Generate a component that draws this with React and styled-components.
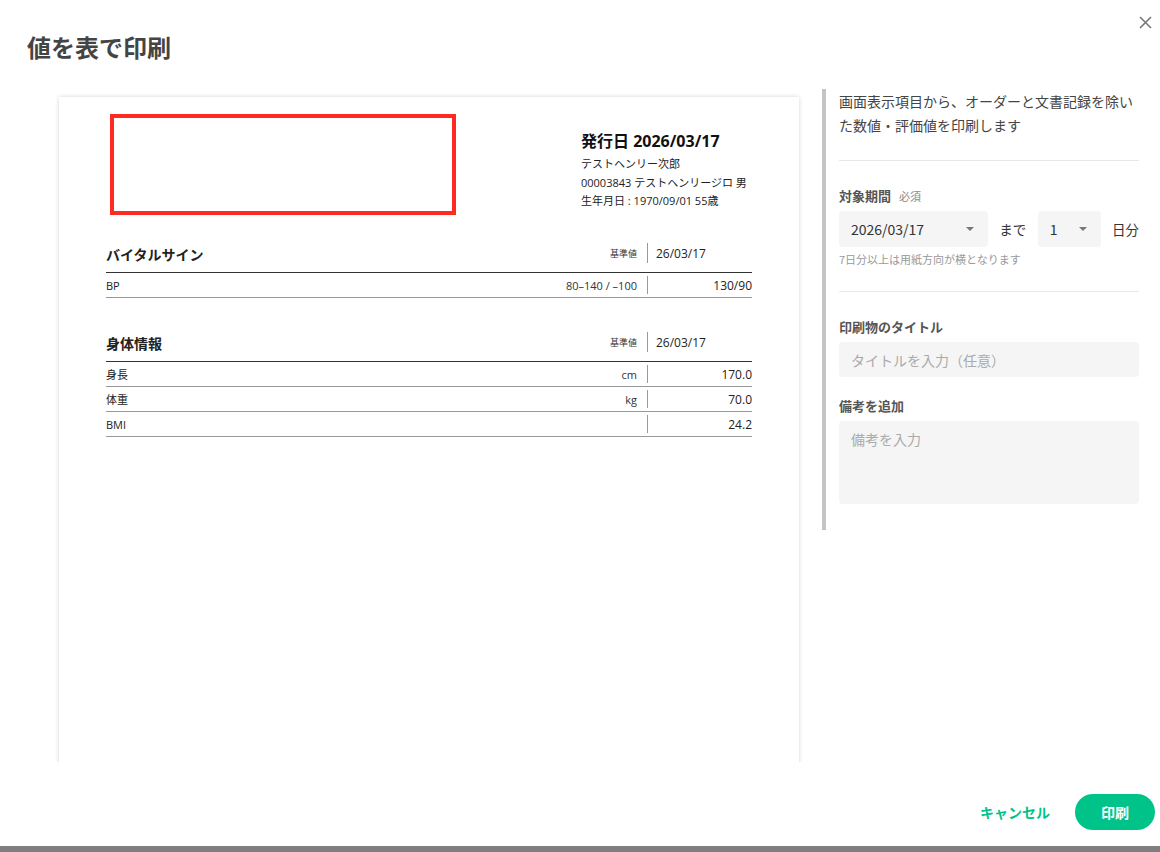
import React from 'react';
import styled, { createGlobalStyle } from 'styled-components';

const colors = {
  text: '#444',
  ink: '#222',
  muted: '#999',
  field: '#f5f5f5',
  green: '#00c389',
};

const GlobalStyle = createGlobalStyle`
  html, body {
    margin: 0;
    padding: 0;
    background: #7f7f7f;
    font-family: "Noto Sans CJK JP", "Noto Sans", sans-serif;
  }
  * { box-sizing: border-box; }
`;

const Modal = styled.div`
  width: 1160px;
  height: 846px;
  background: #fff;
  display: flex;
  flex-direction: column;
`;

const Header = styled.div`
  height: 89px;
  display: flex;
  align-items: flex-start;
  justify-content: space-between;
  padding: 31px 3px 0 27px;
`;

const Title = styled.h1`
  margin: 0;
  font-size: 24px;
  line-height: 32px;
  font-weight: 700;
  color: ${colors.text};
`;

const CloseButton = styled.button`
  margin-top: -21px;
  width: 24px;
  height: 24px;
  padding: 0;
  border: 0;
  background: none;
  display: flex;
  align-items: center;
  justify-content: center;
`;

const Body = styled.div`
  flex: 1;
  display: flex;
  min-height: 0;
`;

const PreviewPane = styled.div`
  width: 822px;
  height: 673px;
  overflow: hidden;
  padding: 8px 0 0 59px;
`;

const Paper = styled.div`
  width: 740px;
  height: 1000px;
  background: #fff;
  box-shadow: 0 0 4px rgba(0, 0, 0, 0.18);
  padding: 17px 47px 0;
  color: ${colors.ink};
  font-family: "Open Sans", "Noto Sans CJK JP", sans-serif;
`;

const PaperHead = styled.div`
  display: flex;
  justify-content: space-between;
  align-items: flex-start;
`;

const LogoBox = styled.div`
  margin-left: 4px;
  width: 346px;
  height: 101px;
  border: 4px solid #ff2b22;
`;

const Issue = styled.div`
  width: 171px;
  margin-top: 16px;
`;

const IssueDate = styled.div`
  font-size: 16px;
  font-weight: 700;
  line-height: 22px;
  color: #111;
  margin-bottom: 3px;
`;

const IssueLine = styled.div`
  font-size: 11px;
  line-height: 18.5px;
  color: #222;
  white-space: nowrap;
`;

const Section = styled.div`
  margin-top: ${(p) => p.$gap}px;
`;

const Row = styled.div`
  display: grid;
  grid-template-columns: 1fr auto 105px;
  align-items: stretch;
  height: ${(p) => (p.$head ? 38 : 25)}px;
  border-bottom: 1px solid ${(p) => (p.$head ? '#333' : '#999')};
`;

const Name = styled.div`
  display: flex;
  align-items: center;
  font-size: ${(p) => (p.$head ? 14 : 11)}px;
  font-weight: ${(p) => (p.$head ? 700 : 400)};
  color: #222;
`;

const Ref = styled.div`
  display: flex;
  align-items: center;
  justify-content: flex-end;
  padding-right: 10px;
  font-size: ${(p) => (p.$head ? 9 : 11)}px;
  color: #333;
`;

const Value = styled.div`
  display: flex;
  align-items: center;
  justify-content: ${(p) => (p.$head ? 'flex-start' : 'flex-end')};
  padding-left: 9px;
  font-size: 12px;
  color: #222;
  position: relative;
  &::before {
    content: '';
    position: absolute;
    left: 0;
    top: ${(p) => (p.$head ? 8 : 3)}px;
    bottom: ${(p) => (p.$head ? 9 : 3)}px;
    width: 1px;
    background: #999;
  }
`;

const Panel = styled.div`
  align-self: flex-start;
  width: 317px;
  border-left: 4px solid #c4c4c4;
  padding: 0 0 26px 13px;
`;

const Intro = styled.p`
  margin: 0;
  width: 300px;
  font-size: 14px;
  line-height: 24px;
  color: ${colors.text};
`;

const Divider = styled.hr`
  width: 300px;
  margin: ${(p) => p.$top}px 0 0;
  border: 0;
  border-top: 1px solid #e8e8e8;
`;

const Label = styled.div`
  margin-top: ${(p) => p.$top}px;
  font-size: 13px;
  line-height: 20px;
  font-weight: 700;
  color: #555;
`;

const Required = styled.span`
  margin-left: 8px;
  font-size: 11px;
  font-weight: 400;
  color: #888;
`;

const PeriodRow = styled.div`
  margin-top: 5px;
  width: 300px;
  display: flex;
  align-items: center;
  justify-content: space-between;
  font-size: 13.5px;
  color: #333;
  white-space: nowrap;
`;

const Select = styled.div`
  flex: none;
  width: ${(p) => p.$w}px;
  height: 36px;
  background: ${colors.field};
  border-radius: 4px;
  display: flex;
  align-items: center;
  justify-content: space-between;
  padding: 0 14px 0 12px;
  font-size: 14px;
  color: #333;
`;

const Caret = styled.span`
  width: 0;
  height: 0;
  border-left: 4px solid transparent;
  border-right: 4px solid transparent;
  border-top: 4px solid #777;
`;

const Hint = styled.div`
  margin-top: 4px;
  font-size: 11px;
  line-height: 16px;
  color: ${colors.muted};
`;

const Field = styled.div`
  margin-top: 5px;
  width: 300px;
  height: ${(p) => p.$h}px;
  background: ${colors.field};
  border-radius: 4px;
  padding: ${(p) => (p.$area ? '7px 12px' : '0 12px')};
  display: flex;
  align-items: ${(p) => (p.$area ? 'flex-start' : 'center')};
  font-size: 14px;
  line-height: 22px;
  color: #aaa;
`;

const Footer = styled.div`
  height: 84px;
  display: flex;
  align-items: center;
  justify-content: flex-end;
  gap: 25px;
  padding: 16px 5px 0 0;
`;

const TextButton = styled.button`
  border: 0;
  background: none;
  padding: 0;
  font-family: inherit;
  font-size: 14px;
  font-weight: 700;
  color: ${colors.green};
`;

const PrimaryButton = styled.button`
  width: 80px;
  height: 36px;
  border: 0;
  border-radius: 18px;
  background: ${colors.green};
  color: #fff;
  font-family: inherit;
  font-size: 14px;
  font-weight: 700;
`;

const sections = [
  {
    title: 'バイタルサイン',
    gap: 20,
    rows: [{ name: 'BP', ref: '80–140 / –100', value: '130/90' }],
  },
  {
    title: '身体情報',
    gap: 26,
    rows: [
      { name: '身長', ref: 'cm', value: '170.0' },
      { name: '体重', ref: 'kg', value: '70.0' },
      { name: 'BMI', ref: '', value: '24.2' },
    ],
  },
];

const App = () => (
  <>
    <GlobalStyle />
    <Modal>
      <Header>
        <Title>値を表で印刷</Title>
        <CloseButton aria-label="閉じる">
          <svg width="13" height="13" viewBox="0 0 13 13">
            <path d="M1 1L12 12M12 1L1 12" stroke="#777" strokeWidth="1.6" />
          </svg>
        </CloseButton>
      </Header>
      <Body>
        <PreviewPane>
          <Paper>
            <PaperHead>
              <LogoBox />
              <Issue>
                <IssueDate>発行日 2026/03/17</IssueDate>
                <IssueLine>テストヘンリー次郎</IssueLine>
                <IssueLine>00003843 テストヘンリージロ 男</IssueLine>
                <IssueLine>生年月日 : 1970/09/01 55歳</IssueLine>
              </Issue>
            </PaperHead>
            {sections.map((s) => (
              <Section key={s.title} $gap={s.gap}>
                <Row $head>
                  <Name $head>{s.title}</Name>
                  <Ref $head>基準値</Ref>
                  <Value $head>26/03/17</Value>
                </Row>
                {s.rows.map((r) => (
                  <Row key={r.name}>
                    <Name>{r.name}</Name>
                    <Ref>{r.ref}</Ref>
                    <Value>{r.value}</Value>
                  </Row>
                ))}
              </Section>
            ))}
          </Paper>
        </PreviewPane>
        <Panel>
          <Intro>画面表示項目から、オーダーと文書記録を除いた数値・評価値を印刷します</Intro>
          <Divider $top={23} />
          <Label $top={25}>
            対象期間<Required>必須</Required>
          </Label>
          <PeriodRow>
            <Select $w={149}>
              2026/03/17
              <Caret />
            </Select>
            <span>まで</span>
            <Select $w={63}>
              1
              <Caret />
            </Select>
            <span>日分</span>
          </PeriodRow>
          <Hint>7日分以上は用紙方向が横となります</Hint>
          <Divider $top={24} />
          <Label $top={25}>印刷物のタイトル</Label>
          <Field $h={35}>タイトルを入力（任意）</Field>
          <Label $top={19}>備考を追加</Label>
          <Field $h={83} $area>備考を入力</Field>
        </Panel>
      </Body>
      <Footer>
        <TextButton>キャンセル</TextButton>
        <PrimaryButton>印刷</PrimaryButton>
      </Footer>
    </Modal>
  </>
);

export default App;
